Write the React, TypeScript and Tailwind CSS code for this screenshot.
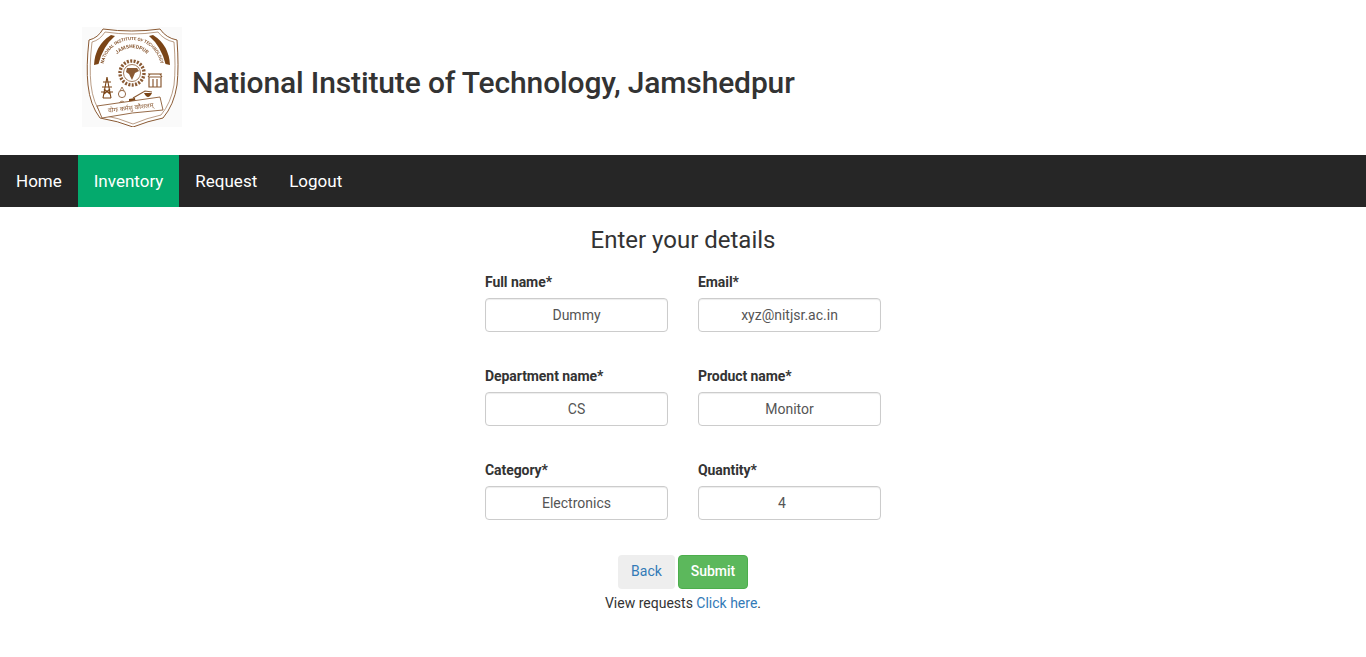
import React from "react";

const font = { fontFamily: "Roboto, sans-serif" };

function Logo() {
  const c = "#8a5a34";
  const dark = "#7a4416";
  return (
    <svg viewBox="0 0 100 100" className="w-[100px] h-[100px] bg-[#fafafa] blur-[0.3px]">
      {/* shield */}
      <path d="M21 2 Q50 6 78 2 Q84 11 95 13 Q97 40 95 58 Q92 78 81 91 Q66 94 51 100 Q36 94 18 91 Q8 78 6 58 Q4 40 7 13 Q16 11 21 2 Z" fill="#fff" stroke={c} strokeWidth="1" />
      <path d="M23 5 Q50 9 76 5 Q82 13 92 15 Q94 40 92 58 Q89 76 79 88 Q65 91 51 97 Q37 91 20 88 Q11 76 9 58 Q7 40 10 15 Q18 13 23 5 Z" fill="none" stroke={c} strokeWidth="0.6" />
      {/* wheat bands */}
      <path d="M12 38 Q13 18 29 8 L33 9 Q21 19 16.5 37 Z" fill={dark} />
      <path d="M88 38 Q87 18 71 8 L67 9 Q79 19 83.5 37 Z" fill={dark} />
      {/* name arcs */}
      <path id="logo-arc" d="M21 42 A29 29 0 0 1 79 42" fill="none" />
      <text fontSize="4.4" fontWeight="700" fill={c} fontFamily="Roboto, sans-serif">
        <textPath href="#logo-arc" startOffset="50%" textAnchor="middle">NATIONAL INSTITUTE OF TECHNOLOGY</textPath>
      </text>
      <path id="logo-arc2" d="M29 42 A21 21 0 0 1 71 42" fill="none" />
      <text fontSize="5" fontWeight="700" fill={c} fontFamily="Roboto, sans-serif">
        <textPath href="#logo-arc2" startOffset="50%" textAnchor="middle">JAMSHEDPUR</textPath>
      </text>
      {/* gear with map */}
      <circle cx="50" cy="46" r="12" fill="none" stroke={c} strokeWidth="3.4" strokeDasharray="2 1.4" />
      <circle cx="50" cy="46" r="8.5" fill="#fff" stroke={c} strokeWidth="0.8" />
      <path d="M45 41 L55 41 L57 44 L53 46 L50 53 L47 47 L44 45 Z" fill={c} />
      {/* pylon */}
      <path d="M25 50 L29 71 M25 50 L21 71 M21 55 H29 M20 60 H30 M19 65 H31 M21 71 H29 M22 62 L28 67 M28 62 L22 67" stroke={dark} strokeWidth="1.1" fill="none" />
      {/* building */}
      <path d="M67 50 H79 V60 H67 Z M71 52 V60 M75 52 V60" stroke={c} strokeWidth="1.2" fill="none" />
      <path d="M66 50 L68 47 M80 50 L78 47 M66 47 H80" stroke={dark} strokeWidth="1" fill="none" />
      {/* flask */}
      <circle cx="40" cy="67" r="3.6" fill="none" stroke={c} strokeWidth="0.9" />
      <path d="M38 64 L40 60 L42 64" stroke={c} strokeWidth="0.8" fill="none" />
      <path d="M36 78 Q40 70 44 78 Z" fill="#fff" stroke={c} strokeWidth="0.8" />
      {/* microscope */}
      <path d="M47 78 V72 L53 71 L54 78 Z" fill={dark} />
      <path d="M51 71 L63 64 L70 65" stroke={c} strokeWidth="1.2" fill="none" />
      <path d="M62 66 Q66 74 70 66 Z" fill={dark} />
      {/* motto scroll */}
      <path d="M15 79 L78 70 L81 83 Q50 85 20 91 Z" fill="#fff" stroke={c} strokeWidth="0.9" />
      <text x="49" y="83" textAnchor="middle" fontSize="6.4" fill={c} fontFamily="'Noto Sans', sans-serif" transform="rotate(-7 49 83)">योगः कर्मसु कौशलम्</text>
    </svg>
  );
}

function Field({ label, value, type = "text" }: { label: string; value: string; type?: string }) {
  return (
    <div className="w-[183px]">
      <label className="block h-5 mb-[6px] text-sm leading-5 font-bold tracking-[-0.07px] text-[#333]">{label}</label>
      <input
        type={type}
        value={value}
        readOnly
        className="block w-full h-[34px] px-3 text-sm text-center text-[#555] bg-white border border-[#ccc] rounded shadow-[inset_0_1px_1px_rgba(0,0,0,0.075)]"
      />
    </div>
  );
}

const navItems = ["Home", "Inventory", "Request", "Logout"];

export default function App() {
  return (
    <div className="min-h-[657px] bg-white text-[#333]" style={font}>
      <header className="h-[155px] flex items-start pt-[27px] pl-[82px]">
        <Logo />
        <h1 className="ml-[10px] mt-[38px] text-[30px] leading-[36px] font-medium tracking-[-0.14px] text-[#333]">
          National Institute of Technology, Jamshedpur
        </h1>
      </header>

      <nav className="h-[52px] bg-[#262626] flex">
        {navItems.map((item) => (
          <a
            key={item}
            href="#"
            className={`px-4 pt-[2px] flex items-center text-[17px] text-white ${item === "Inventory" ? "bg-[#04aa6d]" : ""}`}
          >
            {item}
          </a>
        ))}
      </nav>

      <main className="flex flex-col items-center">
        <h2 className="mt-[20px] text-2xl leading-[27px] text-[#333]">Enter your details</h2>

        <div className="mt-[18px] grid grid-cols-[183px_183px] gap-x-[30px] gap-y-[34px]">
          <Field label="Full name*" value="Dummy" />
          <Field label="Email*" value="xyz@nitjsr.ac.in" type="email" />
          <Field label="Department name*" value="CS" />
          <Field label="Product name*" value="Monitor" />
          <Field label="Category*" value="Electronics" />
          <Field label="Quantity*" value="4" type="number" />
        </div>

        <div className="mt-[35px] flex gap-[3px]">
          <button className="w-[57px] h-[34px] pb-[2px] text-sm text-[#337ab7] bg-[#eee] rounded">Back</button>
          <button className="w-[70px] h-[34px] pb-[2px] text-sm font-medium text-white bg-[#5cb85c] border border-[#4cae4c] rounded">
            Submit
          </button>
        </div>

        <p className="mt-[4px] text-sm leading-5 text-[#333]">
          View requests <a href="#" className="text-[#337ab7]">Click here</a>.
        </p>
      </main>
    </div>
  );
}
